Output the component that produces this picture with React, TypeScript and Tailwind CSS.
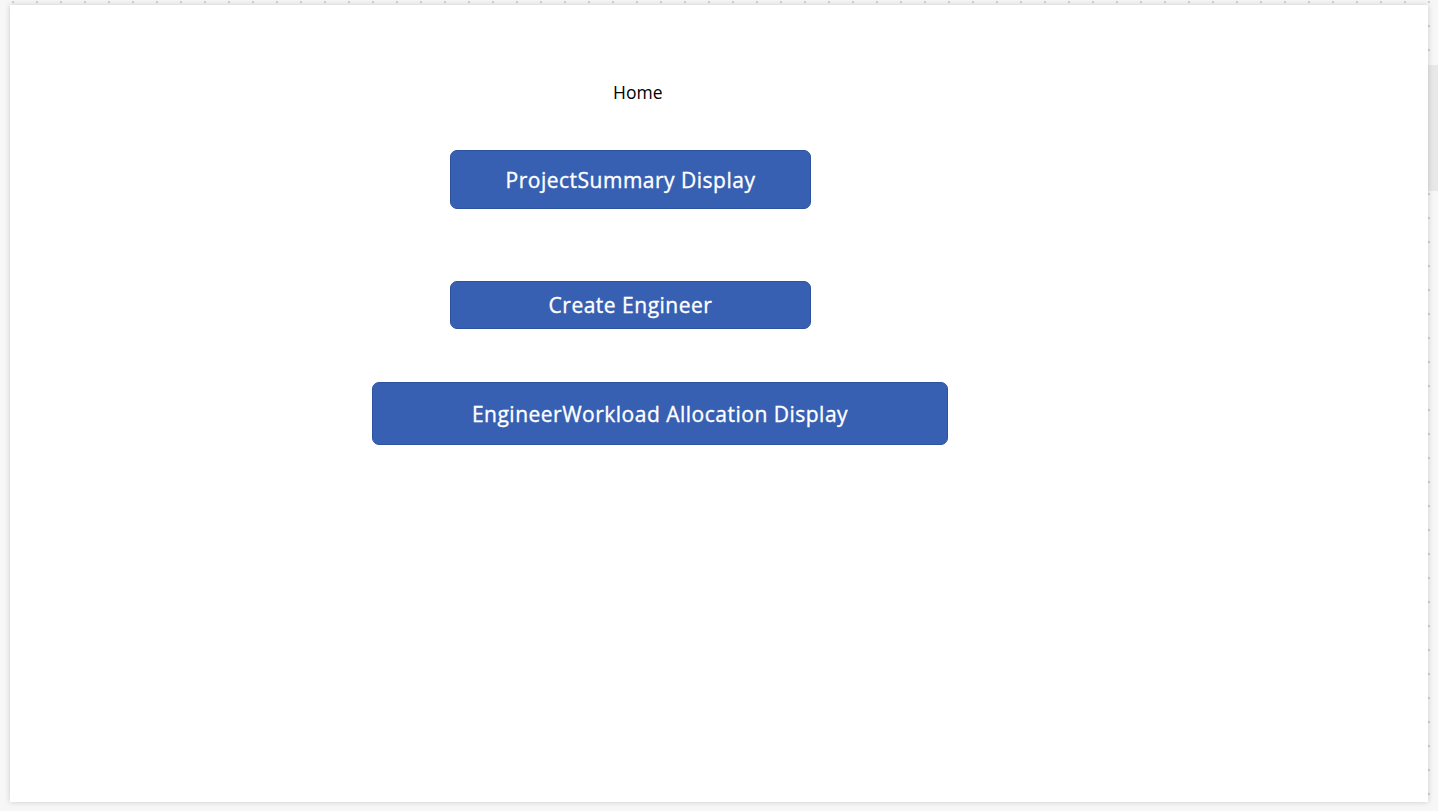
export default function App() {
	return (
		<div className="flex h-[811px] w-[1438px] overflow-hidden bg-[#f7f7f7] bg-[radial-gradient(circle,#d2d2d2_1px,transparent_1.6px)] bg-[size:24px_24px] bg-[position:1px_-10px] pl-[10px] pt-[5px] font-['Open_Sans',sans-serif]">
			<main className="relative h-[797px] w-[1418px] shrink-0 bg-white shadow-[0_0_6px_rgba(0,0,0,0.18)]">
				<div className="flex flex-col pt-[75px]">
					<div className="pl-[603px] text-[17.5px] leading-[24px] text-black">
						Home
					</div>
					<div className="pl-[440px] pt-[46px]">
						<AppButton label="ProjectSummary Display" className="h-[59px] w-[361px]" />
					</div>
					<div className="pl-[440px] pt-[72px]">
						<AppButton label="Create Engineer" className="h-[48px] w-[361px]" />
					</div>
					<div className="pl-[362px] pt-[53px]">
						<AppButton
							label="EngineerWorkload Allocation Display"
							className="h-[63px] w-[576px]"
						/>
					</div>
				</div>
			</main>
			<aside className="w-[10px] shrink-0 pt-[60px]">
				<div className="h-[126px] w-[10px] bg-[#e8e8e8]" />
			</aside>
		</div>
	);
}

function AppButton({ label, className }: { label: string; className: string }) {
	return (
		<button
			type="button"
			className={`flex items-center justify-center rounded-[7px] border border-[#2d52a0] bg-[#3860b2] pt-[2px] text-[21px] tracking-[0.5px] text-white [-webkit-text-stroke:0.35px_white] ${className}`}
		>
			{label}
		</button>
	);
}
